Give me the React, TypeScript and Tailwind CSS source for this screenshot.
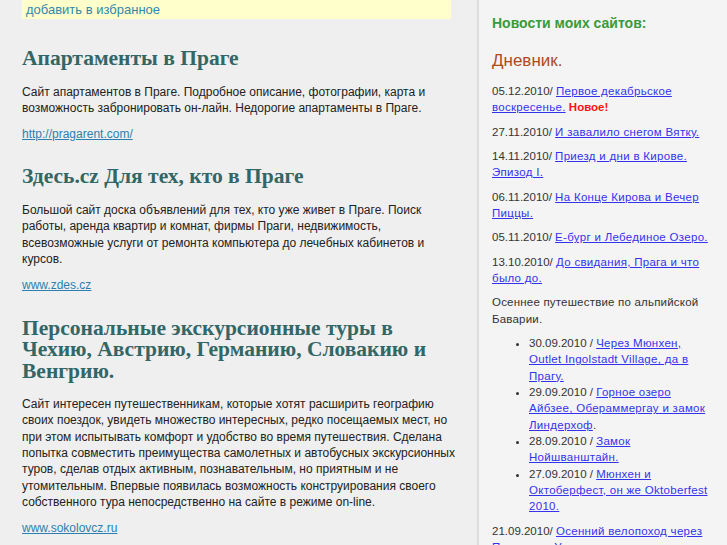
import React from "react";

type Entry = { date: string; title: string; isNew?: boolean };

const ENTRIES_TOP: Entry[] = [
  { date: "05.12.2010", title: "Первое декабрьское воскресенье.", isNew: true },
  { date: "27.11.2010", title: "И завалило снегом Вятку." },
  { date: "14.11.2010", title: "Приезд и дни в Кирове. Эпизод I." },
  { date: "06.11.2010", title: "На Конце Кирова и Вечер Пиццы." },
  { date: "05.11.2010", title: "Е-бург и Лебединое Озеро." },
  { date: "13.10.2010", title: "До свидания, Прага и что было до." },
];

const BAVARIA = [
  { date: "30.09.2010", title: "Через Мюнхен, Outlet Ingolstadt Village, да в Прагу." },
  { date: "29.09.2010", title: "Горное озеро Айбзее, Обераммергау и замок Линдерхоф", tail: "." },
  { date: "28.09.2010", title: "Замок Нойшванштайн." },
  { date: "27.09.2010", title: "Мюнхен и Октоберфест, он же Oktoberfest 2010." },
];

const SITES = [
  {
    title: "Апартаменты в Праге",
    text: "Сайт апартаментов в Праге. Подробное описание, фотографии, карта и возможность забронировать он-лайн. Недорогие апартаменты в Праге.",
    url: "http://pragarent.com/",
  },
  {
    title: "Здесь.cz Для тех, кто в Праге",
    text: "Большой сайт доска объявлений для тех, кто уже живет в Праге. Поиск работы, аренда квартир и комнат, фирмы Праги, недвижимость, всевозможные услуги от ремонта компьютера до лечебных кабинетов и курсов.",
    url: "www.zdes.cz",
  },
  {
    title: "Персональные экскурсионные туры в Чехию, Австрию, Германию, Словакию и Венгрию.",
    text: "Сайт интересен путешественникам, которые хотят расширить географию своих поездок, увидеть множество интересных, редко посещаемых мест, но при этом испытывать комфорт и удобство во время путешествия. Сделана попытка совместить преимущества самолетных и автобусных экскурсионных туров, сделав отдых активным, познавательным, но приятным и не утомительным. Впервые появилась возможность конструирования своего собственного тура непосредственно на сайте в режиме on-line.",
    url: "www.sokolovcz.ru",
  },
];

const link = "text-[#3333ee] underline tracking-[0.3px]";

export default function App() {
  return (
    <div className="flex min-h-screen font-['Liberation_Sans',Arial,sans-serif] text-[#333]">
      {/* Main column */}
      <main className="w-[477px] shrink-0 bg-[#efefef] pl-[22px] pr-[20px]">
        <div className="mr-[6px] h-[19px] bg-[#ffffcc] pl-[4px] text-[13px] leading-[19px] text-[#3388aa]">
          добавить в избранное
        </div>
        <div className="pt-[5px]">
          {SITES.map((s) => (
            <section key={s.url}>
              <h2 className="mt-[24px] mb-[14px] pr-[8px] font-['Liberation_Serif',serif] text-[21.5px] font-bold leading-[21.5px] text-[#336666]">
                {s.title}
              </h2>
              <p className="my-[10px] text-[12px] leading-[16.33px] text-[#222]">{s.text}</p>
              <p className="my-[10px] text-[12px] leading-[16.33px]">
                <a href="#" className="text-[#2e7fb0] underline">
                  {s.url}
                </a>
              </p>
            </section>
          ))}
        </div>
      </main>

      {/* Sidebar */}
      <aside className="flex-1 border-l-[2px] border-[#dcdcdc] bg-[#f4f4f4] pl-[13px] pr-[12px] text-[11.5px] leading-[16.33px]">
        <h3 className="mt-[14px] text-[14px] font-bold leading-[18px] text-[#3a9a3a]">
          Новости моих сайтов:
        </h3>
        <h3 className="mt-[18px] text-[17px] leading-[22px] text-[#b04a1a]">Дневник.</h3>
        <div className="mt-[11px]">
          {ENTRIES_TOP.map((e) => (
            <p key={e.date} className="mb-[8px]">
              {e.date}/{" "}
              <a href="#" className={link}>
                {e.title}
              </a>
              {e.isNew && <b className="text-[#ff1111]"> Новое!</b>}
            </p>
          ))}
          <p className="mb-[8px] tracking-[0.2px]">Осеннее путешествие по альпийской Баварии.</p>
          <ul className="mb-[8px] list-disc pl-[37px]">
            {BAVARIA.map((e) => (
              <li key={e.date}>
                {e.date} /{" "}
                <a href="#" className={link}>
                  {e.title}
                </a>
                {e.tail}
              </li>
            ))}
          </ul>
          <p className="mb-[8px]">
            21.09.2010/{" "}
            <a href="#" className={link}>
              Осенний велопоход через Прокопски Удолы.
            </a>
          </p>
        </div>
      </aside>
    </div>
  );
}
